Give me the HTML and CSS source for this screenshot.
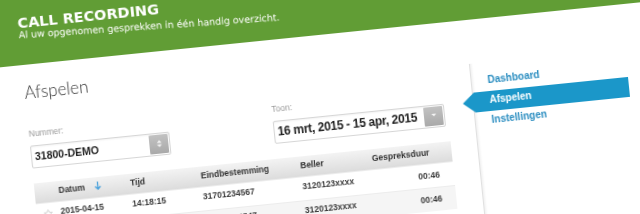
FILE: index.html
```html
<!DOCTYPE html>
<html lang="nl">
<head>
<meta charset="utf-8">
<title>Call Recording</title>
<link rel="stylesheet" href="styles.css">
</head>
<body>
<div class="page">
  <header class="topbar">
    <h1 class="title">CALL RECORDING</h1>
    <p class="subtitle">Al uw opgenomen gesprekken in één handig overzicht.</p>
  </header>
  <div class="layout">
    <main class="main">
      <h2 class="heading">Afspelen</h2>
      <div class="filters">
        <div class="field field-number">
          <span class="label">Nummer:</span>
          <div class="select">
            <span class="select-value">31800-DEMO</span>
            <span class="select-btn">
              <svg width="6" height="8" viewBox="0 0 6 8"><path d="M3 0.5 L5.5 3.2 H0.5 Z M3 7.5 L5.5 4.8 H0.5 Z" fill="#fff" opacity="0.85"/></svg>
            </span>
          </div>
        </div>
        <div class="field field-date">
          <span class="label">Toon:</span>
          <div class="select">
            <span class="select-value select-value-date">16 mrt, 2015 - 15 apr, 2015</span>
            <span class="select-btn">
              <svg width="6" height="8" viewBox="0 0 6 8"><path d="M0.5 2 H5.5 L3 4.6 Z" fill="#fff" opacity="0.9"/></svg>
            </span>
          </div>
        </div>
      </div>
      <table class="calls">
        <colgroup>
          <col class="w-star"><col class="w-date"><col class="w-time"><col class="w-dest"><col class="w-caller"><col class="w-dur">
        </colgroup>
        <thead>
          <tr>
            <th></th>
            <th>Datum <svg class="sort" width="7" height="9" viewBox="0 0 7 9"><path d="M3.5 0.5 V8 M0.8 5.3 L3.5 8 L6.2 5.3" fill="none" stroke="#4aa2dc" stroke-width="1.3"/></svg></th>
            <th>Tijd</th>
            <th>Eindbestemming</th>
            <th>Beller</th>
            <th>Gespreksduur</th>
          </tr>
        </thead>
        <tbody>
          <tr>
            <td class="c-star"><svg width="9" height="9" viewBox="0 0 10 10"><path d="M5 0.6 L6.3 3.6 L9.5 3.8 L7 5.9 L7.8 9.2 L5 7.4 L2.2 9.2 L3 5.9 L0.5 3.8 L3.7 3.6 Z" fill="none" stroke="#c9c9c9" stroke-width="0.9"/></svg></td>
            <td>2015-04-15</td>
            <td>14:18:15</td>
            <td>31701234567</td>
            <td>3120123xxxx</td>
            <td class="c-dur">00:46</td>
          </tr>
          <tr class="alt">
            <td class="c-star"><svg width="9" height="9" viewBox="0 0 10 10"><path d="M5 0.6 L6.3 3.6 L9.5 3.8 L7 5.9 L7.8 9.2 L5 7.4 L2.2 9.2 L3 5.9 L0.5 3.8 L3.7 3.6 Z" fill="none" stroke="#c9c9c9" stroke-width="0.9"/></svg></td>
            <td>2015-04-15</td>
            <td>14:12:47</td>
            <td>31701234547</td>
            <td>3120123xxxx</td>
            <td class="c-dur">00:46</td>
          </tr>
        </tbody>
      </table>
    </main>
    <nav class="nav">
      <a class="nav-item" href="#">Dashboard</a>
      <a class="nav-item active" href="#">Afspelen</a>
      <a class="nav-item" href="#">Instellingen</a>
    </nav>
  </div>
</div>
</body>
</html>
```

FILE: styles.css
```css
html, body {
  margin: 0;
  padding: 0;
  overflow: hidden;
  background: #fff;
}

.page {
  width: 720px;
  height: 340px;
  background: #fff;
  transform-origin: 0 0;
  transform: rotate(-5.8deg) translate(-30px, -10px);
  filter: blur(0.3px);
}

.topbar {
  height: 77px;
  box-sizing: border-box;
  background: #619d35;
  padding: 29px 0 0 45px;
  color: #fff;
}

.title {
  margin: 0;
  font: 700 14.5px/13px "DejaVu Sans", Verdana, sans-serif;
}

.subtitle {
  margin: 0.3px 0 0;
  font: 400 9.5px/9px "DejaVu Sans", Verdana, sans-serif;
  transform-origin: 0 100%;
  transform: rotate(1.9deg);
}

.layout {
  display: flex;
  align-items: flex-start;
  padding-left: 30px;
}

.main {
  width: 460px;
  box-sizing: border-box;
  padding: 17.6px 26px 0 15px;
}

.heading {
  margin: 0;
  font: 300 17px/20px Lato, "Open Sans", sans-serif;
  color: #333;
}

.filters {
  display: flex;
  gap: 104px;
  margin-top: 26.6px;
}

.field-number { width: 140px; }
.field-date { width: 172px; }

.label {
  display: block;
  font: 400 8.5px/10px "Liberation Sans", Arial, sans-serif;
  color: #9a9a9a;
  margin-bottom: 6.8px;
}

.select {
  height: 23px;
  box-sizing: border-box;
  border: 1px solid #d6d6d6;
  border-radius: 2px;
  display: flex;
  align-items: center;
  justify-content: space-between;
  padding: 1px 1px 1px 3px;
  background: #fff;
  box-shadow: inset 0 1px 2px rgba(0, 0, 0, 0.05);
}

.select-value {
  font: 700 10.5px/12px "Liberation Sans", Arial, sans-serif;
  color: #1e1e1e;
}

.select-value-date {
  font-size: 12px;
  letter-spacing: -0.3px;
}

.select-btn {
  width: 19px;
  height: 19px;
  background: linear-gradient(#c2c2c2, #a9a9a9);
  border-radius: 1px;
  display: flex;
  align-items: center;
  justify-content: center;
}

.calls {
  margin-top: 15.5px;
  width: 419px;
  border-collapse: collapse;
  table-layout: fixed;
  font: 700 8.5px/10px "Liberation Sans", Arial, sans-serif;
}

.w-star { width: 22px; }
.w-date { width: 72px; }
.w-time { width: 71px; }
.w-dest { width: 100px; }
.w-caller { width: 72px; }
.w-dur { width: 82px; }

.calls thead tr {
  height: 20px;
  background: linear-gradient(#f3f3f3, #dcdcdc);
}

.calls th {
  text-align: left;
  vertical-align: top;
  padding: 3.5px 0 0 2px;
  color: #333;
  white-space: nowrap;
}

.sort {
  margin-left: 7px;
  vertical-align: -1px;
}

.calls td {
  height: 24px;
  box-sizing: border-box;
  vertical-align: top;
  padding: 4px 0 0 2px;
  color: #3a3a3a;
  border-top: 1px solid #ececec;
  white-space: nowrap;
}

.calls tr.alt td {
  background: #f5f5f5;
}

.calls td.c-star {
  padding: 6px 0 0 7px;
}

.calls td.c-dur {
  text-align: right;
  padding: 6px 14px 0 0;
}

.nav {
  width: 156px;
  min-height: 240px;
  margin-top: 44px;
  padding-top: 9px;
  border-left: 1px solid #e0e0e0;
  box-shadow: inset 3px 0 3px -2px rgba(0, 0, 0, 0.08);
}

.nav-item {
  display: block;
  height: 20px;
  box-sizing: border-box;
  padding: 0 0 2px 16px;
  font: 700 10px/18px "Liberation Sans", Arial, sans-serif;
  color: #2a8dc0;
  text-decoration: none;
}

.nav-item.active {
  margin-left: -11px;
  padding-left: 27px;
  color: #fff;
  background: #1b97c9;
  clip-path: polygon(12px 0, 100% 0, 100% 100%, 12px 100%, 0 50%);
}
```
